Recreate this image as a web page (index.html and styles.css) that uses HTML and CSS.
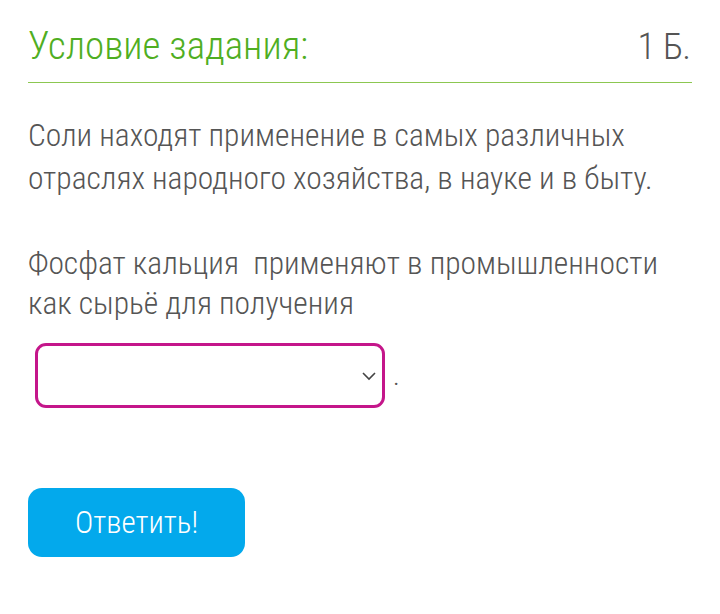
FILE: index.html
```html
<!DOCTYPE html>
<html lang="ru">
<head>
<meta charset="utf-8">
<link rel="stylesheet" href="styles.css">
</head>
<body>
<main class="task">
  <header class="task-head">
    <h1 class="task-title">Условие задания:</h1>
    <span class="task-points">1 Б.</span>
  </header>
  <p class="task-text">Соли находят применение в самых различных отраслях народного хозяйства, в науке и в быту.</p>
  <p class="task-text task-question">Фосфат кальция&nbsp; применяют в промышленности как сырьё для получения</p>
  <div class="answer-row">
    <div class="select">
      <svg class="select-arrow" width="16" height="10" viewBox="0 0 16 10"><path d="M2 2 L8 8 L14 2" fill="none" stroke="#444" stroke-width="1.6"/></svg>
    </div>
    <span class="answer-dot">.</span>
  </div>
  <button class="submit">Ответить!</button>
</main>
</body>
</html>
```
FILE: styles.css
```css
html, body {
  margin: 0;
  background: #fff;
}
body {
  font-family: "Roboto", "Liberation Sans", sans-serif;
  font-weight: 300;
  font-stretch: condensed;
  color: #555;
}
.task {
  padding: 22px 28px 0 28px;
}
.task-head {
  display: flex;
  justify-content: space-between;
  align-items: baseline;
  border-bottom: 1.5px solid #8cc751;
  padding-bottom: 12px;
}
.task-title {
  margin: 0;
  font-size: 39px;
  font-weight: 300;
  color: #4fae22;
  line-height: 48px;
}
.task-points {
  font-size: 37px;
  color: #555;
  margin-right: 2px;
  letter-spacing: -1px;
  word-spacing: 1px;
}
.task-text {
  margin: 31px 0 0 0;
  font-size: 31.5px;
  line-height: 43px;
  padding-right: 20px;
}
.task-question {
  margin-top: 44px;
  line-height: 40px;
}
.answer-row {
  display: flex;
  align-items: center;
  margin-top: 19px;
  padding-left: 7px;
}
.select {
  box-sizing: border-box;
  width: 350px;
  height: 65px;
  border: 3px solid #c4168a;
  border-radius: 11px;
  display: flex;
  align-items: center;
  justify-content: flex-end;
  padding-right: 5px;
}
.answer-dot {
  font-size: 28px;
  margin-left: 8px;
  line-height: 40px;
}
.submit {
  display: block;
  margin-top: 80px;
  width: 217px;
  height: 69px;
  border: none;
  border-radius: 14px;
  background: #03a9ec;
  color: #fff;
  font-family: inherit;
  font-weight: 300;
  font-stretch: condensed;
  font-size: 31px;
  padding: 0 0 0 0;
}
```
